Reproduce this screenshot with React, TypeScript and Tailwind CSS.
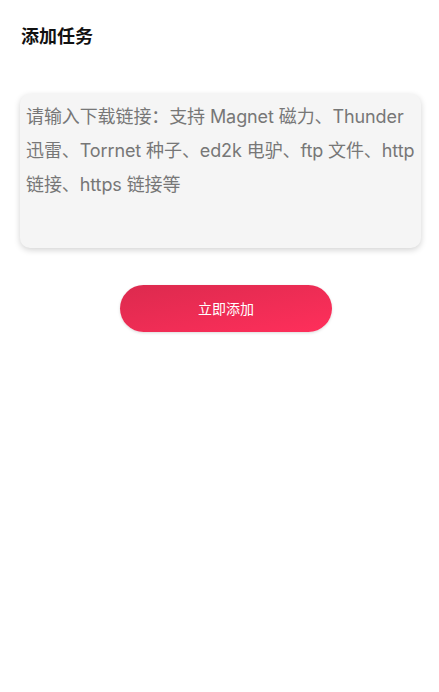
export default function App() {
  return (
    <div className="w-[439px] h-[692px] bg-white" style={{ fontFamily: 'Inter, "Noto Sans CJK SC", sans-serif' }}>
      <div className="pt-[24px] pl-[21px]">
        <h1 className="text-[18px] font-bold leading-[26px] text-[#111]">添加任务</h1>
      </div>
      <div className="ml-[20px] mr-[18px] mt-[44px] h-[154px] rounded-[10px] bg-[#f5f5f5] shadow-[0_2px_6px_rgba(0,0,0,0.18)] pl-[6px] pr-[2px] pt-[6px]">
        <p className="text-[18px] leading-[34px] text-[#777] whitespace-nowrap tracking-[-0.1px]">
          请输入下载链接：支持 Magnet 磁力、Thunder
          <br />
          迅雷、Torrnet 种子、ed2k 电驴、ftp 文件、http
          <br />
          链接、https 链接等
        </p>
      </div>
      <div className="mt-[37px] pl-[120px]">
        <button className="w-[212px] h-[47px] rounded-full bg-gradient-to-br from-[#dc2a4e] to-[#ff2f5b] text-white text-[14px] shadow-[0_1px_3px_rgba(0,0,0,0.15)]">
          立即添加
        </button>
      </div>
    </div>
  );
}
